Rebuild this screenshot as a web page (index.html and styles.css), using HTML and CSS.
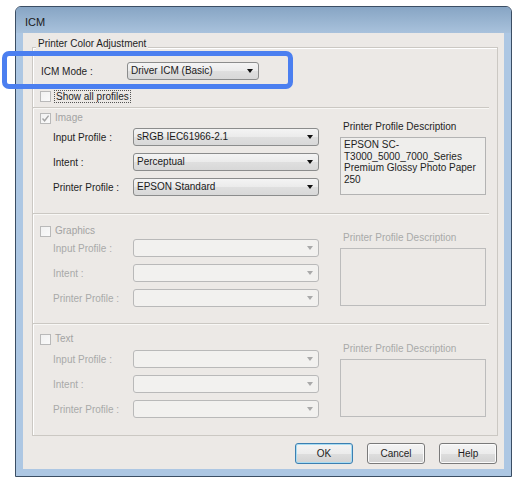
FILE: index.html
```html
<!DOCTYPE html>
<html lang="en">
<head>
  <meta charset="UTF-8">
  <meta name="viewport" content="width=device-width, initial-scale=1.0">
  <title>ICM</title>
  <link rel="stylesheet" href="styles.css">
</head>
<body>
  <div class="window">
    <div class="titlebar">ICM</div>

    <div class="client">
      <div class="groupbox">
        <div class="legend">Printer Color Adjustment</div>

        <div class="mode-row">
          <span class="mode-label">ICM Mode :</span>
          <div class="combo mode-combo">Driver ICM (Basic)<span class="arrow"></span></div>
        </div>

        <div class="check-row show-all">
          <span class="checkbox"></span>
          <span class="focus-text">Show all profiles</span>
        </div>

        <!-- Image -->
        <div class="section section-image">
          <div class="check-row disabled">
            <span class="checkbox">
              <svg width="9" height="9" viewBox="0 0 9 9"><path d="M1.5 4.5 L3.6 6.8 L7.6 1.6" fill="none" stroke="#a4a4a4" stroke-width="1.4"/></svg>
            </span>
            Image
          </div>
          <div class="section-body">
            <div class="rows">
              <div class="row"><span class="row-label">Input Profile :</span><div class="combo">sRGB IEC61966-2.1<span class="arrow"></span></div></div>
              <div class="row"><span class="row-label">Intent :</span><div class="combo">Perceptual<span class="arrow"></span></div></div>
              <div class="row"><span class="row-label">Printer Profile :</span><div class="combo">EPSON Standard<span class="arrow"></span></div></div>
            </div>
            <div class="desc">
              <div class="desc-title">Printer Profile Description</div>
              <div class="desc-box">EPSON SC-<br>T3000_5000_7000_Series<br>Premium Glossy Photo Paper<br>250</div>
            </div>
          </div>
        </div>

        <!-- Graphics -->
        <div class="section section-graphics off">
          <div class="check-row">
            <span class="checkbox"></span>
            Graphics
          </div>
          <div class="section-body">
            <div class="rows">
              <div class="row"><span class="row-label">Input Profile :</span><div class="combo"><span class="arrow"></span></div></div>
              <div class="row"><span class="row-label">Intent :</span><div class="combo"><span class="arrow"></span></div></div>
              <div class="row"><span class="row-label">Printer Profile :</span><div class="combo"><span class="arrow"></span></div></div>
            </div>
            <div class="desc">
              <div class="desc-title">Printer Profile Description</div>
              <div class="desc-box"></div>
            </div>
          </div>
        </div>

        <!-- Text -->
        <div class="section section-text off">
          <div class="check-row">
            <span class="checkbox"></span>
            Text
          </div>
          <div class="section-body">
            <div class="rows">
              <div class="row"><span class="row-label">Input Profile :</span><div class="combo"><span class="arrow"></span></div></div>
              <div class="row"><span class="row-label">Intent :</span><div class="combo"><span class="arrow"></span></div></div>
              <div class="row"><span class="row-label">Printer Profile :</span><div class="combo"><span class="arrow"></span></div></div>
            </div>
            <div class="desc">
              <div class="desc-title">Printer Profile Description</div>
              <div class="desc-box"></div>
            </div>
          </div>
        </div>
      </div>

      <div class="buttons">
        <button class="btn btn-default">OK</button>
        <button class="btn">Cancel</button>
        <button class="btn">Help</button>
      </div>
    </div>
  </div>

  <!-- callout round the mode setting -->
  <div class="highlight"></div>
</body>
</html>
```

FILE: styles.css
```css
body {
  margin: 0;
  padding: 0;
  background-color: #ffffff;
  font-family: "Liberation Sans", Arial, sans-serif;
  font-size: 10px;
  color: #1e1e1e;
}

/* window frame */
.window {
  margin: 6px 0 0 15px;
  width: 497px;
  box-sizing: border-box;
  border: 1px solid #3b4e64;
  border-radius: 6px 6px 0 0;
  background-color: #adc7e3;
  padding: 0 7px 7px 7px;
}
.titlebar {
  margin: 0 -7px;
  height: 26px;
  box-sizing: border-box;
  padding: 8px 0 0 9px;
  line-height: 15px;
  font-size: 11px;
  color: #1b1b1b;
  border-radius: 5px 5px 0 0;
  background: linear-gradient(#87a5c4, #a9c2dc);
}
.client {
  height: 436px;
  box-sizing: border-box;
  background-color: #ece9e6;
  padding: 14px 6px 0 9px;
}

/* group box */
.groupbox {
  border: 1px solid #cbc8c3;
  box-shadow: inset 1px 1px 0 #ffffff;
  height: 389px;
  box-sizing: border-box;
}
.legend {
  width: fit-content;
  margin: -10px 0 0 3px;
  padding: 0 2px;
  line-height: 12px;
  background-color: #ece9e6;
}
.mode-row {
  display: flex;
  align-items: center;
  margin-top: 12px;
  padding-left: 8px;
}
.mode-label {
  width: 86px;
}
.mode-combo {
  width: 132px !important;
}

.check-row {
  display: flex;
  align-items: center;
  height: 12px;
  line-height: 12px;
}
.show-all {
  margin-top: 10px;
  padding-left: 7px;
}
.focus-text {
  outline: 1px dotted #555;
  padding: 0 1px;
  line-height: 11px;
}
.checkbox {
  width: 11px;
  height: 11px;
  box-sizing: border-box;
  border: 1px solid #b9b9b9;
  background: linear-gradient(135deg, #f1f1f1, #fafafa);
  margin-right: 4px;
  display: flex;
  align-items: center;
  justify-content: center;
}
.checkbox svg {
  display: block;
}

/* profile sections */
.section {
  margin-right: 8px;
  border-top: 1px solid #cbc8c3;
  box-shadow: inset 0 1px 0 #f8f7f5;
  padding-left: 7px;
}
.section-image {
  margin-top: 5px;
  padding-top: 4px;
  padding-bottom: 17px;
}
.section-image .section-body {
  margin-top: 4px;
}
.section-graphics {
  padding-top: 11px;
  padding-bottom: 16px;
}
.section-graphics .section-body {
  margin-top: 2px;
}
.section-text {
  padding-top: 9px;
}
.section-text .section-body {
  margin-top: 5px;
}
.check-row.disabled,
.off .check-row {
  color: #a3a3a3;
}
.section-body {
  display: flex;
  align-items: flex-start;
}
.rows {
  padding-left: 13px;
  display: flex;
  flex-direction: column;
  gap: 7px;
}
.row {
  display: flex;
  align-items: center;
  height: 18px;
}
.row-label {
  width: 80px;
}
.off .row-label {
  color: #a9a9a9;
}

/* combo boxes */
.combo {
  position: relative;
  width: 186px;
  height: 18px;
  box-sizing: border-box;
  border: 1px solid #8b8c8c;
  border-radius: 3px;
  background: linear-gradient(#f4f4f4, #ebebeb 50%, #dfdfdf 51%, #d8d8d8);
  padding-left: 3px;
  line-height: 16px;
  color: #1a1a1a;
}
.arrow {
  position: absolute;
  right: 5px;
  top: 6px;
  width: 0;
  height: 0;
  border-left: 3.5px solid transparent;
  border-right: 3.5px solid transparent;
  border-top: 4px solid #111;
}
.off .combo {
  border-color: #b9b9b9;
  background: #f2f1ef;
}
.off .arrow {
  border-top-color: #a9a9a9;
}

/* description panel */
.desc {
  margin: -7px 0 0 21px;
  width: 146px;
}
.desc-title {
  line-height: 12px;
  padding-left: 3px;
}
.off .desc-title {
  color: #a9a9a9;
}
.desc-box {
  margin-top: 4px;
  height: 58px;
  box-sizing: border-box;
  border: 1px solid #b3b3b3;
  background-color: #efeeec;
  padding: 1px 3px;
  line-height: 11.6px;
  color: #1e1e1e;
}
.off .desc-box {
  border-color: #bcbcbc;
  background-color: #ece9e6;
}

/* dialog buttons */
.buttons {
  display: flex;
  justify-content: flex-end;
  gap: 14px;
  margin-top: 7px;
  padding-right: 1px;
}
.btn {
  width: 58px;
  height: 21px;
  padding: 0;
  font-family: "Liberation Sans", Arial, sans-serif;
  font-size: 10px;
  color: #1e1e1e;
  border: 1px solid #7a7a7a;
  border-radius: 3px;
  background: linear-gradient(#f4f4f4, #ececec 50%, #dedede 51%, #d2d2d2);
  box-shadow: inset 0 0 0 1px #fbfbfb;
}
.btn-default {
  border-color: #3c7fb1;
  box-shadow: inset 0 0 0 1px #a8dcf2;
}

/* blue callout frame */
.highlight {
  position: absolute;
  left: 2px;
  top: 51px;
  width: 291px;
  height: 38px;
  box-sizing: border-box;
  border: 5px solid #4b7ff0;
  border-radius: 7px;
}
```
